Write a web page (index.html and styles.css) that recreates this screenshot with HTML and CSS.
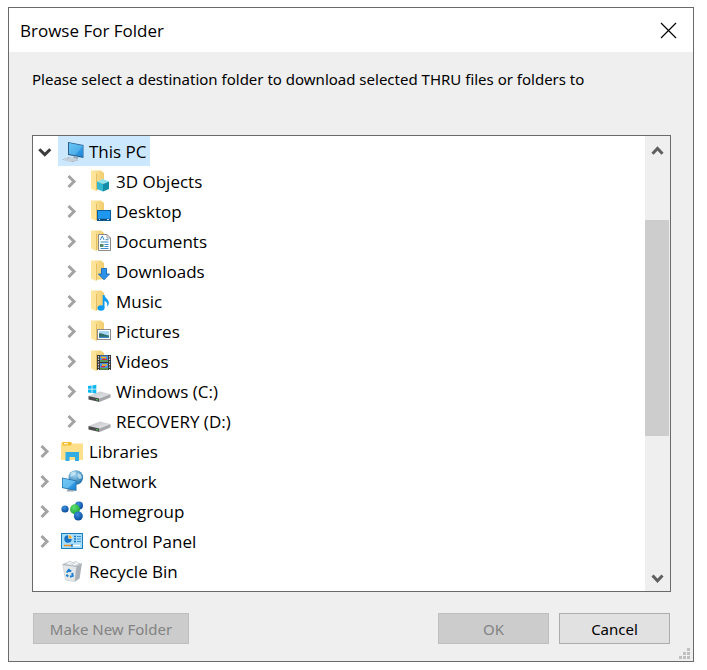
FILE: index.html
```html
<!DOCTYPE html>
<html lang="en">
<head>
    <meta charset="UTF-8">
    <meta name="viewport" content="width=device-width, initial-scale=1.0">
    <title>Browse For Folder</title>
    <link rel="stylesheet" href="styles.css">
</head>
<body>

    <!-- shapes shared by several icons -->
    <svg class="defs" aria-hidden="true">
        <defs>
            <linearGradient id="screen" x1="0" y1="0" x2="1" y2="1">
                <stop offset="0" stop-color="#5cc0f5"/>
                <stop offset="1" stop-color="#1c84d6"/>
            </linearGradient>
            <linearGradient id="yellow" x1="0" y1="0" x2="1" y2="0">
                <stop offset="0" stop-color="#ffe9a6"/>
                <stop offset="1" stop-color="#f0cc6c"/>
            </linearGradient>
            <radialGradient id="globe" cx="0.4" cy="0.3" r="0.7">
                <stop offset="0" stop-color="#a9daf3"/>
                <stop offset="1" stop-color="#1f72ad"/>
            </radialGradient>
            <radialGradient id="blueBall" cx="0.4" cy="0.3" r="0.7">
                <stop offset="0" stop-color="#3f8fe0"/>
                <stop offset="1" stop-color="#084a9c"/>
            </radialGradient>
            <radialGradient id="greenBall" cx="0.4" cy="0.3" r="0.7">
                <stop offset="0" stop-color="#5fe070"/>
                <stop offset="1" stop-color="#1fa53c"/>
            </radialGradient>
            <linearGradient id="metal" x1="0" y1="0" x2="1" y2="1">
                <stop offset="0" stop-color="#c2c4c8"/>
                <stop offset="1" stop-color="#e6e7ea"/>
            </linearGradient>
        </defs>
        <symbol id="chevron" viewBox="0 0 16 16">
            <path d="M3.5 3L9 8.5L3.5 14" fill="none" stroke="currentColor" stroke-width="3"/>
        </symbol>
        <symbol id="chevron-open" viewBox="0 0 16 16">
            <path d="M1.3 6.2L6.8 11.6L12.3 6.2" fill="none" stroke="currentColor" stroke-width="3"/>
        </symbol>
        <symbol id="arrow-up" viewBox="0 0 16 16">
            <path d="M2.5 10.8L7.5 5.5L12.5 10.8" fill="none" stroke="currentColor" stroke-width="3"/>
        </symbol>
        <symbol id="arrow-down" viewBox="0 0 16 16">
            <path d="M2.5 7.5L7.5 12.8L12.5 7.5" fill="none" stroke="currentColor" stroke-width="3"/>
        </symbol>
        <symbol id="folder" viewBox="0 0 24 24">
            <path d="M3 1.5H13L16 4V20L8 21L3 19Z" fill="url(#yellow)"/>
            <path d="M3 1.5L8 4.5V22L3 19.5Z" fill="#ffe59b"/>
            <path d="M8 4.5V22L9 21V5Z" fill="#e5bd5e"/>
        </symbol>
        <symbol id="drive" viewBox="0 0 24 24">
            <path d="M0.5 17L12 12.5L22.5 15L11.5 19.5Z" fill="url(#metal)"/>
            <path d="M0.5 17L11.5 19.5V23L0.5 20.5Z" fill="#4b4b4d"/>
            <path d="M11.5 19.5L22.5 15V18.5L11.5 23Z" fill="#a5a6a9"/>
            <path d="M8 20.5L10 21" stroke="#4fd15b" stroke-width="1"/>
        </symbol>
    </svg>

    <div class="dialog" role="dialog" aria-labelledby="title">
        <div class="titlebar">
            <h1 id="title">Browse For Folder</h1>
            <button class="close" aria-label="Close">
                <svg width="17" height="17" viewBox="0 0 17 17"><path d="M1 1L16 16M16 1L1 16" stroke="#000" stroke-width="1.2"/></svg>
            </button>
        </div>

        <div class="content">
            <p class="message">Please select a destination folder to download selected THRU files or folders to</p>

            <div class="tree-box">
                <ul class="tree">
                    <li>
                        <div class="row">
                            <button class="toggle open" aria-label="Collapse"><svg><use href="#chevron-open"/></svg></button>
                            <button class="item selected">
                                <svg class="icon" viewBox="0 0 24 24">
                                    <path d="M7 3L22.5 6V19L7 16Z" fill="#2b5f8d"/>
                                    <path d="M8 4L22 6.8V17.8L8 15Z" fill="url(#screen)"/>
                                    <path d="M8 4L22 6.8L14 16.2L8 15Z" fill="#7bcdf7" opacity="0.4"/>
                                    <path d="M13 17L17 18V20L12 19Z" fill="#9aa8b3"/>
                                    <path d="M1 20.5L8 18L18 21L11 23.2Z" fill="#aab7c2"/>
                                    <path d="M3 20.3L11 22.3M5 19.5L13.5 21.6M8 18.8L15.5 21" stroke="#dfe7ed" stroke-width="0.7"/>
                                </svg>
                                <span>This PC</span>
                            </button>
                        </div>
                        <ul>
                            <li class="row">
                                <button class="toggle" aria-label="Expand"><svg><use href="#chevron"/></svg></button>
                                <button class="item">
                                    <svg class="icon" viewBox="0 0 24 24">
                                        <use href="#folder"/>
                                        <path d="M15 10L21 12.5L15 15L9 12.5Z" fill="#8fe3ee"/>
                                        <path d="M9 12.5L15 15V22.5L9 20Z" fill="#35b6cf"/>
                                        <path d="M21 12.5L15 15V22.5L21 20Z" fill="#138da8"/>
                                    </svg>
                                    <span>3D Objects</span>
                                </button>
                            </li>
                            <li class="row">
                                <button class="toggle" aria-label="Expand"><svg><use href="#chevron"/></svg></button>
                                <button class="item">
                                    <svg class="icon" viewBox="0 0 24 24">
                                        <use href="#folder"/>
                                        <rect x="9.5" y="11.5" width="13" height="10" fill="#1e97ee" stroke="#0b5f9f"/>
                                        <path d="M10 20.5H22" stroke="#0b4674" stroke-width="1.5"/>
                                        <path d="M11 20.5H12M19 20.5H21" stroke="#fff" stroke-width="0.8"/>
                                    </svg>
                                    <span>Desktop</span>
                                </button>
                            </li>
                            <li class="row">
                                <button class="toggle" aria-label="Expand"><svg><use href="#chevron"/></svg></button>
                                <button class="item">
                                    <svg class="icon" viewBox="0 0 24 24">
                                        <use href="#folder"/>
                                        <path d="M10.5 5.5H19L22.5 9V21.5H10.5Z" fill="#fff" stroke="#8a8a8a"/>
                                        <path d="M19 5.5V9H22.5" fill="none" stroke="#8a8a8a" stroke-width="0.8"/>
                                        <path d="M12.3 11L14.3 7L16 11M12.5 13H20.5M17.5 10.7H20.5M16.5 15.5H20.5M12.5 19.5H20.5M16.5 17.5H20.5" fill="none" stroke="#3b8bc9"/>
                                        <rect x="12" y="15" width="3.5" height="3" fill="#4f8b6a"/>
                                    </svg>
                                    <span>Documents</span>
                                </button>
                            </li>
                            <li class="row">
                                <button class="toggle" aria-label="Expand"><svg><use href="#chevron"/></svg></button>
                                <button class="item">
                                    <svg class="icon" viewBox="0 0 24 24">
                                        <use href="#folder"/>
                                        <path d="M13.5 9.5H18.5V15H21.5L16 20.8L10.5 15H13.5Z" fill="#2d93e8" stroke="#2070bb"/>
                                    </svg>
                                    <span>Downloads</span>
                                </button>
                            </li>
                            <li class="row">
                                <button class="toggle" aria-label="Expand"><svg><use href="#chevron"/></svg></button>
                                <button class="item">
                                    <svg class="icon" viewBox="0 0 24 24">
                                        <use href="#folder"/>
                                        <ellipse cx="13" cy="19" rx="3.5" ry="2.8" fill="#0c9bf0"/>
                                        <path d="M14.7 6H16.5C17 9.5 21.5 10.5 20.8 14.5C20.6 16 20 17 19 17.5C20 14.5 18.5 12.5 16.5 12V19H14.7Z" fill="#0c9bf0"/>
                                    </svg>
                                    <span>Music</span>
                                </button>
                            </li>
                            <li class="row">
                                <button class="toggle" aria-label="Expand"><svg><use href="#chevron"/></svg></button>
                                <button class="item">
                                    <svg class="icon" viewBox="0 0 24 24">
                                        <use href="#folder"/>
                                        <rect x="9.5" y="10.5" width="13" height="10" fill="#fff" stroke="#8d8d8d"/>
                                        <rect x="11" y="12" width="10" height="7" fill="#a9d6f3"/>
                                        <path d="M11 14.5C13 13.5 15 15.5 21 16.5V19H11Z" fill="#2f6f68"/>
                                        <path d="M11 17.7H21V19H11Z" fill="#3f86c2"/>
                                    </svg>
                                    <span>Pictures</span>
                                </button>
                            </li>
                            <li class="row">
                                <button class="toggle" aria-label="Expand"><svg><use href="#chevron"/></svg></button>
                                <button class="item">
                                    <svg class="icon" viewBox="0 0 24 24">
                                        <use href="#folder"/>
                                        <rect x="9" y="6" width="14" height="15" fill="#333"/>
                                        <path d="M10.5 7V21M21.5 7V21" stroke="#ddd" stroke-width="1.2" stroke-dasharray="1.4 1.2"/>
                                        <rect x="12" y="6.5" width="8" height="6.5" fill="#4d8fe0"/>
                                        <rect x="12" y="14" width="8" height="6.5" fill="#4d8fe0"/>
                                        <path d="M12 12H20M12 19.7H20" stroke="#5d9a35" stroke-width="1.5"/>
                                        <path d="M13 8.5H18M14 16H19" stroke="#f2b41d" stroke-width="1.6"/>
                                        <path d="M14 10.3H19M13 17.7H17" stroke="#d0342c" stroke-width="1.3"/>
                                    </svg>
                                    <span>Videos</span>
                                </button>
                            </li>
                            <li class="row">
                                <button class="toggle" aria-label="Expand"><svg><use href="#chevron"/></svg></button>
                                <button class="item">
                                    <svg class="icon" viewBox="0 0 24 24">
                                        <use href="#drive"/>
                                        <path d="M0 7L3.6 6.5V9.8H0ZM4.4 6.4L8.3 5.8V9.8H4.4ZM0 10.6H3.6V14L0 13.5ZM4.4 10.6H8.3V14.6L4.4 14.1Z" fill="#0fb5ee"/>
                                    </svg>
                                    <span>Windows (C:)</span>
                                </button>
                            </li>
                            <li class="row">
                                <button class="toggle" aria-label="Expand"><svg><use href="#chevron"/></svg></button>
                                <button class="item">
                                    <svg class="icon" viewBox="0 0 24 24"><use href="#drive"/></svg>
                                    <span>RECOVERY (D:)</span>
                                </button>
                            </li>
                        </ul>
                    </li>
                    <li class="row">
                        <button class="toggle" aria-label="Expand"><svg><use href="#chevron"/></svg></button>
                        <button class="item">
                            <svg class="icon" viewBox="0 0 24 24">
                                <path d="M0 4H1.5V3H10L11.5 4.5H22V21H0Z" fill="#ffe08a"/>
                                <path d="M1.5 3H9.5L11 4.5L9.5 6.5H1.5Z" fill="#f3bd2e"/>
                                <path d="M3 4.7H7" stroke="#fff" stroke-width="1"/>
                                <path d="M4.5 22V13H18V22H14V18H8.5V22Z" fill="#32ade3"/>
                            </svg>
                            <span>Libraries</span>
                        </button>
                    </li>
                    <li class="row">
                        <button class="toggle" aria-label="Expand"><svg><use href="#chevron"/></svg></button>
                        <button class="item">
                            <svg class="icon" viewBox="0 0 24 24">
                                <circle cx="14.8" cy="8.5" r="7.3" fill="url(#globe)"/>
                                <path d="M10 4C12 2 14 2 15 3.5L13.5 6L11 7L9 8ZM17 4L20 5.5L21 9L18.5 10L16.5 7.5Z" fill="#d5edf7" opacity="0.7"/>
                                <path d="M7 19.5L11 20.5L13.5 22.5L5.5 22.5Z" fill="#9aa8b3"/>
                                <path d="M1 8.5L15.5 11.5V22L1 19Z" fill="#2875ad"/>
                                <path d="M1.8 9.6L14.7 12.2V20.9L1.8 18.2Z" fill="url(#screen)"/>
                                <path d="M1.8 9.6L14.7 12.2L7 19.3L1.8 18.2Z" fill="#8bd6fa" opacity="0.5"/>
                            </svg>
                            <span>Network</span>
                        </button>
                    </li>
                    <li class="row">
                        <button class="toggle" aria-label="Expand"><svg><use href="#chevron"/></svg></button>
                        <button class="item">
                            <svg class="icon" viewBox="0 0 24 24">
                                <circle cx="4" cy="10" r="3.6" fill="url(#blueBall)"/>
                                <circle cx="18" cy="6.5" r="4" fill="url(#blueBall)"/>
                                <circle cx="14" cy="10.3" r="5" fill="url(#greenBall)"/>
                                <circle cx="17.3" cy="17" r="4.5" fill="url(#blueBall)"/>
                            </svg>
                            <span>Homegroup</span>
                        </button>
                    </li>
                    <li class="row">
                        <button class="toggle" aria-label="Expand"><svg><use href="#chevron"/></svg></button>
                        <button class="item">
                            <svg class="icon" viewBox="0 0 24 24">
                                <rect x="0.5" y="4.5" width="21" height="15" fill="#a5dcfa" stroke="#1c7dbd"/>
                                <circle cx="7" cy="10" r="3.7" fill="#1673c4"/>
                                <path d="M7.5 9.5V5.8A3.7 3.7 0 0 1 11.2 9.5Z" fill="#f6a821" stroke="#fff" stroke-width="0.5"/>
                                <path d="M13 7.5H15M13 10H15M13 12.5H15" stroke="#1673c4" stroke-width="1.4"/>
                                <path d="M16 7.5H20M16 10H20M16 12.5H20" stroke="#3d92cf"/>
                                <path d="M3 16.5H11" stroke="#f08a1d" stroke-width="1.4"/>
                                <path d="M11 16.5H19" stroke="#fff" stroke-width="1.4"/>
                                <path d="M11 15V18" stroke="#1673c4" stroke-width="1.4"/>
                            </svg>
                            <span>Control Panel</span>
                        </button>
                    </li>
                    <li class="row">
                        <span class="toggle"></span>
                        <button class="item">
                            <svg class="icon" viewBox="0 0 24 24">
                                <path d="M1.8 5.5L15.5 7.5L13.8 22.7L4.5 21Z" fill="#e3e7ea" stroke="#c3c9cd" stroke-width="0.6"/>
                                <path d="M15.5 7.5L20.8 5L18.6 19.5L13.8 22.7Z" fill="#a9b1b7"/>
                                <path d="M1.8 5.5L8 3L20.8 5L15.5 7.5Z" fill="#c3cacf" stroke="#a3abb1" stroke-width="0.7"/>
                                <path d="M4.5 5.3L8.5 2L12 3.7L15 2.3L18.5 5L14 6.8Z" fill="#f4f6f7" stroke="#b8bfc4" stroke-width="0.6"/>
                                <path d="M9 3.5L11 5.5L14.5 4" fill="none" stroke="#c6ccd0" stroke-width="0.8"/>
                                <path d="M5.8 13.5L7.8 10.8L10.2 12.5M11.2 14L11.7 16.8L9 17.8M7.2 17.5L5.3 15.8" fill="none" stroke="#1a7fd4" stroke-width="2"/>
                            </svg>
                            <span>Recycle Bin</span>
                        </button>
                    </li>
                </ul>

                <div class="scrollbar">
                    <button aria-label="Scroll up"><svg><use href="#arrow-up"/></svg></button>
                    <div class="track"><div class="thumb"></div></div>
                    <button aria-label="Scroll down"><svg><use href="#arrow-down"/></svg></button>
                </div>
            </div>

            <div class="buttons">
                <button class="btn new-folder" disabled>Make New Folder</button>
                <button class="btn" disabled>OK</button>
                <button class="btn">Cancel</button>
            </div>
        </div>

        <svg class="grip" width="11" height="11" viewBox="0 0 11 11">
            <path d="M8 0h3v3h-3zM4 4h3v3h-3zM8 4h3v3h-3zM0 8h3v3h-3zM4 8h3v3h-3zM8 8h3v3h-3z" fill="#bfbfbf"/>
        </svg>
    </div>

</body>
</html>
```
FILE: styles.css
```css
* {
    margin: 0;
    padding: 0;
    box-sizing: border-box;
}

body {
    background: #fff;
    color: #000;
    font-family: "Open Sans", "Noto Sans", sans-serif;
    font-size: 17px;
    padding: 7px 13px 8px 8px;
}

button {
    font: inherit;
    color: inherit;
    background: none;
    border: none;
}

ul {
    list-style: none;
}

.defs {
    position: absolute;
    width: 0;
    height: 0;
}

.dialog {
    position: relative;
    background: #efefef;
    border: 1px solid #6a6a6a;
}

.titlebar {
    display: flex;
    justify-content: space-between;
    align-items: center;
    height: 44px;
    padding: 0 11px;
    background: #fff;
}

.titlebar h1 {
    font-size: 17px;
    font-weight: normal;
}

.close {
    display: flex;
    padding: 5px;
}

.content {
    padding: 16px 22px 17px;
}

.message {
    font-family: "Noto Sans", sans-serif;
    font-size: 15px;
    line-height: 22px;
    margin-bottom: 45px;
    margin-left: 1px;
}

.tree-box {
    display: flex;
    margin-left: 1px;
    background: #fff;
    border: 1px solid #6a6a6a;
}

.tree {
    flex: 1;
    padding-bottom: 5px;
}

.tree ul {
    padding-left: 27px;
}

.row {
    display: flex;
    height: 30px;
}

.toggle {
    display: flex;
    align-items: center;
    justify-content: center;
    width: 25px;
    color: #a3a3a3;
}

.toggle svg,
.scrollbar svg {
    width: 16px;
    height: 16px;
}

.toggle.open {
    color: #3c3c3c;
}

.item {
    display: flex;
    align-items: center;
    gap: 4px;
    padding: 0 3px;
    white-space: nowrap;
}

.item.selected {
    background: #cce8ff;
}

.icon {
    width: 24px;
    height: 24px;
}

.scrollbar {
    display: flex;
    flex-direction: column;
    width: 25px;
    background: #efefef;
    color: #5f5f5f;
}

.scrollbar button {
    display: flex;
    align-items: center;
    justify-content: center;
    height: 30px;
}

.track {
    flex: 1;
    padding-top: 54px;
}

.thumb {
    width: 24px;
    height: 216px;
    background: #cdcdcd;
}

.buttons {
    display: flex;
    gap: 10px;
    margin-top: 21px;
    padding: 0 1px 0 2px;
}

.btn {
    width: 111px;
    height: 31px;
    font-family: "Noto Sans", sans-serif;
    font-size: 15px;
    background: #e1e1e1;
    border: 1px solid #adadad;
}

.btn:disabled {
    color: #838383;
    background: #cccccc;
    border-color: #bfbfbf;
}

.new-folder {
    width: 156px;
    margin-right: auto;
}

.grip {
    position: absolute;
    right: 3px;
    bottom: 2px;
}
```
